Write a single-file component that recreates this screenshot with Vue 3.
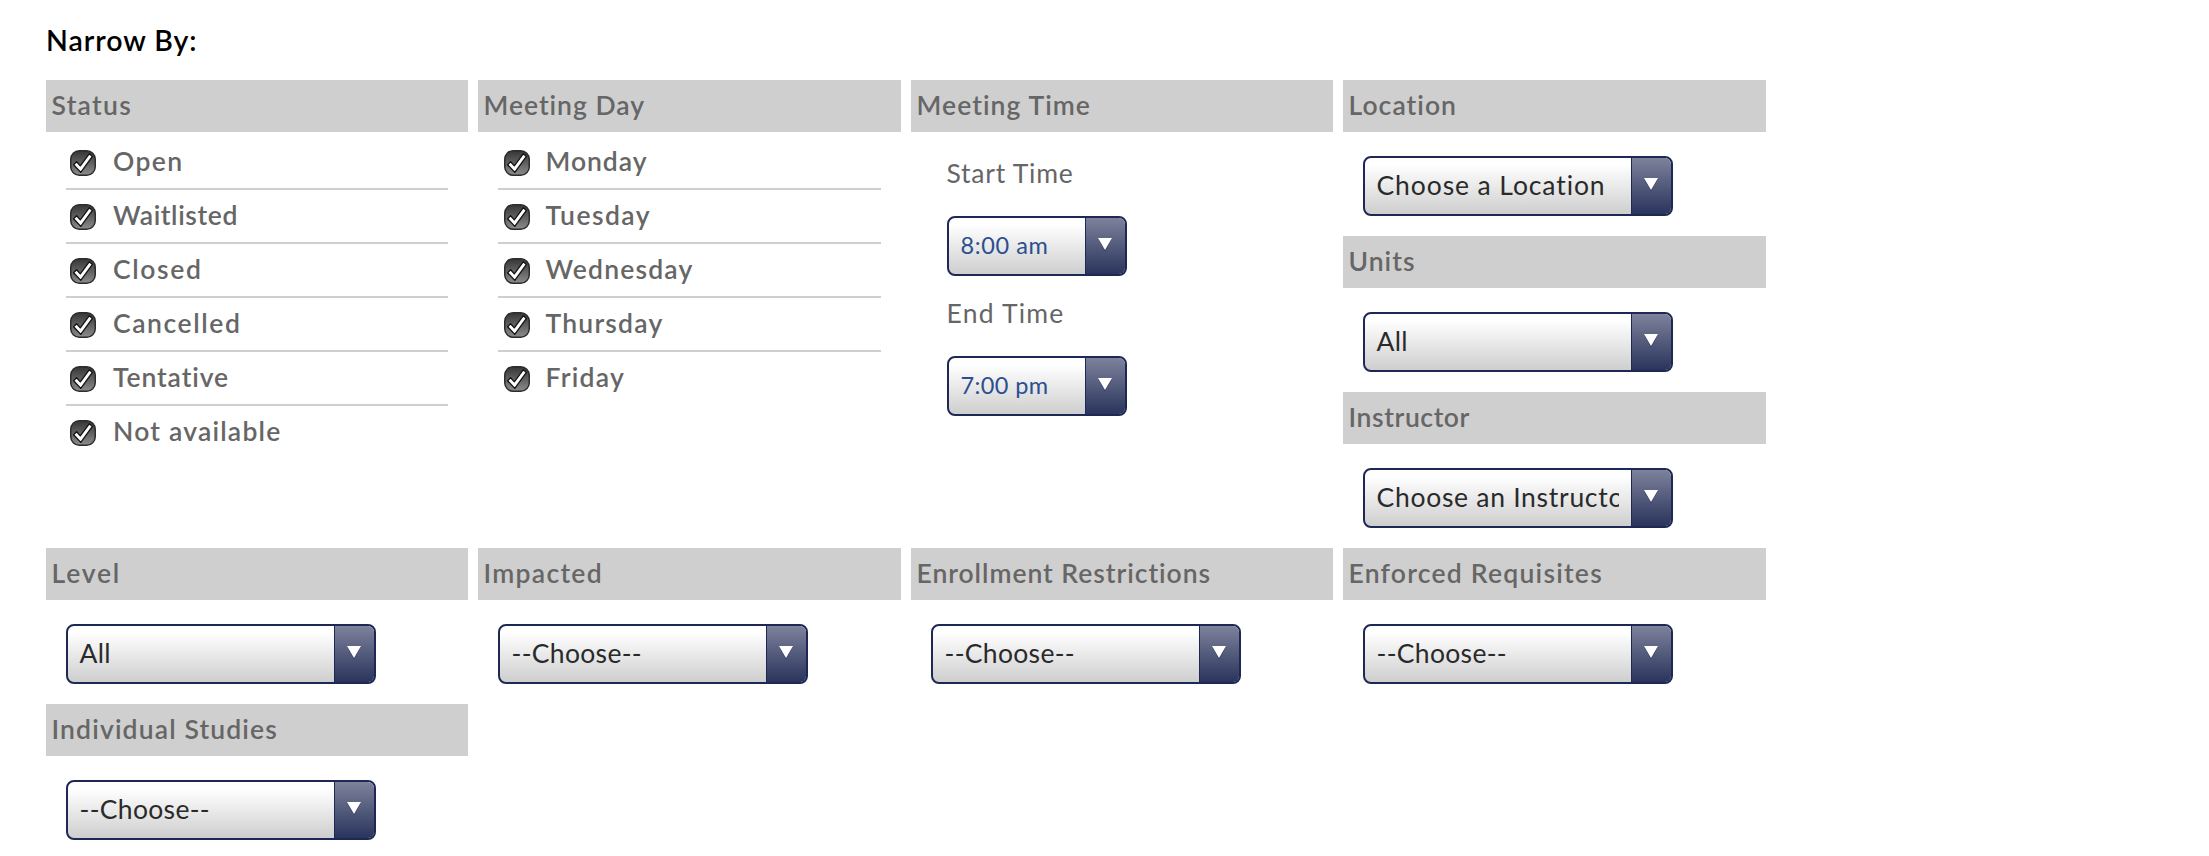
<script setup>
const statuses = [
  { text: 'Open', w: 70.5 },
  { text: 'Waitlisted', w: 125 },
  { text: 'Closed', w: 89.5 },
  { text: 'Cancelled', w: 128.5 },
  { text: 'Tentative', w: 116.5 },
  { text: 'Not available', w: 168.5 },
]
const days = [
  { text: 'Monday', w: 102 },
  { text: 'Tuesday', w: 105.5 },
  { text: 'Wednesday', w: 148 },
  { text: 'Thursday', w: 118 },
  { text: 'Friday', w: 79.5 },
]
const lists = [
  { title: 'Status', w: 80.5, items: statuses, kind: 'status' },
  { title: 'Meeting Day', w: 162, items: days, kind: 'days' },
]
const times = [
  { label: 'Start Time', w: 127, value: '8:00 am', vw: 88 },
  { label: 'End Time', w: 118, value: '7:00 pm', vw: 88 },
]
const side = [
  { title: 'Location', w: 109, value: 'Choose a Location', vw: 229.5 },
  { title: 'Units', w: 67, value: 'All', vw: 31.5 },
  { title: 'Instructor', w: 121.5, value: 'Choose an Instructor', vw: 258 },
]
const lower = [
  { title: 'Level', w: 69.5, value: 'All', vw: 31.5 },
  { title: 'Impacted', w: 119.5, value: '--Choose--', vw: 130.5 },
  { title: 'Enrollment Restrictions', w: 295, value: '--Choose--', vw: 130.5 },
  { title: 'Enforced Requisites', w: 254.5, value: '--Choose--', vw: 130.5 },
  { title: 'Individual Studies', w: 226.5, value: '--Choose--', vw: 130.5 },
]

// Tracks a label out (or in) so that it occupies the given width.
const vFit = {
  mounted(el, { value }) {
    const gaps = el.textContent.length
    const natural = el.getBoundingClientRect().width
    el.style.letterSpacing = `${(value - natural) / gaps}px`
  },
}
</script>

<template>
  <main class="filters">
    <h1><span v-fit="151.5" class="t">Narrow By:</span></h1>
    <div class="grid">
      <section v-for="l in lists" :key="l.title">
        <h2><span v-fit="l.w" class="t">{{ l.title }}</span></h2>
        <ul :class="l.kind">
          <li v-for="i in l.items" :key="i.text">
            <svg class="check" viewBox="0 0 26 26" role="checkbox" aria-checked="true">
              <defs>
                <linearGradient id="face" x1="0" y1="0" x2="0" y2="1">
                  <stop offset="0" stop-color="#353535" />
                  <stop offset="1" stop-color="#8c8c8c" />
                </linearGradient>
              </defs>
              <rect x=".75" y=".75" width="24.5" height="24.5" rx="8.5" fill="url(#face)" stroke="#2c2c2c" stroke-width="1.5" />
              <path d="M3.6 14.7 6.6 11.8 10.3 15.9 19.2 3.8 22.4 6.4 10.8 22.4Z" fill="#fff" stroke="#111" stroke-width="1.3" stroke-linejoin="round" />
            </svg>
            <span v-fit="i.w" class="t">{{ i.text }}</span>
          </li>
        </ul>
      </section>

      <section>
        <h2><span v-fit="175" class="t">Meeting Time</span></h2>
        <div class="times">
          <div v-for="t in times" :key="t.label" class="time">
            <div class="label"><span v-fit="t.w" class="t">{{ t.label }}</span></div>
            <div class="select small">
              <div class="value"><span v-fit="t.vw" class="t">{{ t.value }}</span></div>
              <div class="arrow"><svg viewBox="0 0 14 14"><path class="shade" d="M0 1H14L7 13.5Z" /><path d="M0 0H14L7 12Z" fill="#fff" /></svg></div>
            </div>
          </div>
        </div>
      </section>

      <div>
        <section v-for="s in side" :key="s.title">
          <h2><span v-fit="s.w" class="t">{{ s.title }}</span></h2>
          <div class="select">
            <div class="value"><span v-fit="s.vw" class="t">{{ s.value }}</span></div>
            <div class="arrow"><svg viewBox="0 0 14 14"><path class="shade" d="M0 1H14L7 13.5Z" /><path d="M0 0H14L7 12Z" fill="#fff" /></svg></div>
          </div>
        </section>
      </div>

      <section v-for="s in lower" :key="s.title">
        <h2><span v-fit="s.w" class="t">{{ s.title }}</span></h2>
        <div class="select">
          <div class="value"><span v-fit="s.vw" class="t">{{ s.value }}</span></div>
          <div class="arrow"><svg viewBox="0 0 14 14"><path class="shade" d="M0 1H14L7 13.5Z" /><path d="M0 0H14L7 12Z" fill="#fff" /></svg></div>
        </div>
      </section>
    </div>
  </main>
</template>

<style>
body { background: #fff; }
</style>

<style scoped>
.filters {
  box-sizing: border-box;
  width: 1766px;
  padding: 20px 0 0 46px;
  font-family: Lato, "Open Sans", sans-serif;
  font-size: 26.5px;
  color: #666;
}
h1, h2, ul { margin: 0; padding: 0; }
.t { display: inline-block; white-space: nowrap; }
h1 {
  height: 60px;
  line-height: 40px;
  font-size: 28.5px;
  font-weight: 600;
  color: #000;
}
.grid {
  display: grid;
  grid-template-columns: 422px 423px 422px 423px;
  column-gap: 10px;
}
h2 {
  box-sizing: border-box;
  height: 52px;
  padding-left: 5.5px;
  background: #cfcfcf;
  font-size: 26.5px;
  font-weight: 600;
  line-height: 50px;
}
ul { list-style: none; margin: 4px 20px 0; }
li {
  display: flex;
  align-items: flex-start;
  height: 52px;
  padding-left: 4px;
  border-bottom: 2px solid #cfcfcf;
  font-weight: 600;
  line-height: 50px;
}
li:last-child { border-bottom: 0; }
.days li { padding-left: 6px; }
.check { width: 26px; height: 26px; margin: 14px 17px 0 0; }
.days .check { margin-right: 15.5px; }
.times { padding: 10px 0 0 36px; }
.time { height: 140px; }
.label { height: 74px; line-height: 62px; }
.label .t { margin-left: -0.5px; }
.select {
  box-sizing: border-box;
  display: flex;
  width: 310px;
  height: 60px;
  margin: 24px 20px 20px;
  overflow: hidden;
  border: 2px solid #1d2855;
  border-radius: 8px;
  background: linear-gradient(#fff 12%, #cecece);
  color: #2a2a2a;
}
.select.small { width: 180px; margin: 0; color: #2b4f8f; font-size: 23.5px; }
.value {
  flex: 1;
  min-width: 0;
  margin-right: 12px;
  padding-left: 11.5px;
  overflow: hidden;
  line-height: 54px;
}
.arrow {
  box-sizing: border-box;
  width: 40px;
  padding: 20px 0 0 12px;
  border-left: 1px solid #1d2855;
  background: linear-gradient(#7d829b, #2a345c);
}
.arrow svg { display: block; width: 14px; height: 14px; }
.shade { fill: #1d2855; opacity: .5; }
</style>
